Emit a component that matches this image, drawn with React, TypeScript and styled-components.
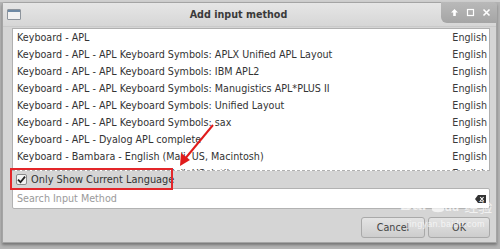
import styled, { createGlobalStyle } from "styled-components";

const GlobalStyle = createGlobalStyle`
  html, body {
    margin: 0;
    padding: 0;
    background: #9c9c9c;
  }
  body {
    font-family: "DejaVu Sans", "Liberation Sans", sans-serif;
    font-size: 9.6px;
    color: #333;
  }
`;

const methods = [
  "Keyboard - APL",
  "Keyboard - APL - APL Keyboard Symbols: APLX Unified APL Layout",
  "Keyboard - APL - APL Keyboard Symbols: IBM APL2",
  "Keyboard - APL - APL Keyboard Symbols: Manugistics APL*PLUS II",
  "Keyboard - APL - APL Keyboard Symbols: Unified Layout",
  "Keyboard - APL - APL Keyboard Symbols: sax",
  "Keyboard - APL - Dyalog APL complete",
  "Keyboard - Bambara - English (Mali, US, Macintosh)",
  "Keyboard - Bambara - English (Mali, US, Intl)",
];

const App = () => {
  return (
    <>
      <GlobalStyle />
      <Screen>
        <Window>
          <TitleBar>
            <WindowIcon />
            <Title>Add input method</Title>
            <Controls>
              <svg width="9" height="9" viewBox="0 0 9 9">
                <path d="M4.5 1 L8 4.5 H5.8 V8 H3.2 V4.5 H1 Z" fill="#fff" />
              </svg>
              <svg width="9" height="9" viewBox="0 0 9 9">
                <rect x="1.5" y="1.5" width="6" height="6" fill="none" stroke="#fff" strokeWidth="1.2" />
              </svg>
              <svg width="9" height="9" viewBox="0 0 9 9">
                <path d="M1.5 1.5 L7.5 7.5 M7.5 1.5 L1.5 7.5" stroke="#fff" strokeWidth="1.6" />
              </svg>
            </Controls>
          </TitleBar>

          <Body>
            <List>
              {methods.map((m) => (
                <Row key={m}>
                  <span>{m}</span>
                  <Lang>English</Lang>
                </Row>
              ))}
            </List>

            <CheckRow>
              <CheckBox>
                <svg width="9" height="9" viewBox="0 0 9 9">
                  <path d="M1 4.6 L3.5 7.2 L8 1.6" fill="none" stroke="#222" strokeWidth="1.8" />
                </svg>
              </CheckBox>
              <span>Only Show Current Language</span>
              <Highlight />
            </CheckRow>

            <Search>
              <Placeholder>Search Input Method</Placeholder>
              <svg width="11" height="8" viewBox="0 0 11 8">
                <path d="M3 0 H11 V8 H3 L0 4 Z" fill="#333" />
                <path d="M5.2 2 L8.6 6 M8.6 2 L5.2 6" stroke="#fff" strokeWidth="1.1" />
              </svg>
            </Search>

            <Buttons>
              <Button $width={64}>Cancel</Button>
              <Button $width={62}>OK</Button>
            </Buttons>
          </Body>
        </Window>

        <Arrow width="500" height="249" viewBox="0 0 500 249">
          <line x1="213" y1="125" x2="184" y2="160" stroke="#e01b1b" strokeWidth="2" />
          <path d="M180 166 L181 153 L190 160 Z" fill="#e01b1b" />
        </Arrow>

        <Watermark>
          <Brand>
            Bai
            <svg width="22" height="20" viewBox="0 0 22 20">
              <ellipse cx="5" cy="6" rx="2.4" ry="3" fill="#fff" />
              <ellipse cx="10" cy="3.2" rx="2.4" ry="3" fill="#fff" />
              <ellipse cx="15.5" cy="4" rx="2.4" ry="3" fill="#fff" />
              <ellipse cx="19" cy="9" rx="2.2" ry="2.8" fill="#fff" />
              <path d="M11 8 C7 8 4 14 5 17 C6 20 16 20 17 17 C18 14 15 8 11 8 Z" fill="#fff" />
            </svg>
            <Du>du</Du>
            <Cn>经验</Cn>
          </Brand>
          <Site>jingyan.baidu.com</Site>
        </Watermark>
      </Screen>
    </>
  );
};

//  --- Layout ---
const Screen = styled.div`
  position: relative;
  width: 500px;
  height: 249px;
  overflow: hidden;
  background: linear-gradient(#cfcfcf 0 2px, #b4b4b4 2px);
  padding: 2px 3px 0 2px;
  box-sizing: border-box;
`;

const Window = styled.div`
  display: flex;
  flex-direction: column;
  height: 239px;
  background: #d5d5d5;
  border: 1px solid #a4a4a4;
  border-radius: 3px 3px 0 0;
  box-shadow: 0 2px 3px rgba(0, 0, 0, 0.35);
`;

const TitleBar = styled.div`
  position: relative;
  display: flex;
  align-items: center;
  height: 23px;
  padding-left: 4px;
  background: linear-gradient(#e6e6e6, #d6d6d6);
  border-bottom: 1px solid #cacaca;
`;

const WindowIcon = styled.div`
  width: 12px;
  height: 9px;
  border: 1px solid #8d949c;
  background: linear-gradient(#6f8aa5 0 2px, #f2f2f2 2px);
  border-radius: 1px;
`;

const Title = styled.div`
  flex: 1;
  text-align: center;
  font-weight: bold;
  font-size: 9.6px;
  color: #3a3a3a;
  padding-right: 40px;
`;

const Controls = styled.div`
  position: absolute;
  top: -1px;
  right: -1px;
  display: flex;
  align-items: center;
  gap: 7px;
  height: 21px;
  padding: 0 6px 0 9px;
  background: linear-gradient(#b9b9b9, #a5a5a5);
  border-radius: 0 3px 0 6px;
`;

const Body = styled.div`
  display: flex;
  flex-direction: column;
  padding: 1px 6px 0 9px;
`;

const List = styled.div`
  height: 141px;
  overflow: hidden;
  background: #fff;
  border: 1px solid #b0b0b0;
  border-bottom-style: dashed;
`;

const Row = styled.div`
  display: flex;
  justify-content: space-between;
  align-items: center;
  height: 17px;
  padding: 0 2px 0 4px;
  white-space: nowrap;
`;

const Lang = styled.span`
  color: #3a3a3a;
`;

const CheckRow = styled.div`
  position: relative;
  display: flex;
  align-items: center;
  gap: 4px;
  height: 17px;
  padding: 0 0 0 4px;
  font-size: 9.8px;
`;

const CheckBox = styled.div`
  display: flex;
  align-items: center;
  justify-content: center;
  width: 9px;
  height: 9px;
  background: #f4f4f4;
  border: 1px solid #8a8a8a;
  border-radius: 2px;
`;

const Highlight = styled.div`
  position: absolute;
  left: -2px;
  top: -3px;
  width: 159px;
  height: 18px;
  border: 2px solid #e3262a;
`;

const Search = styled.div`
  display: flex;
  align-items: center;
  justify-content: space-between;
  height: 19px;
  padding: 0 3px 0 4px;
  background: #fff;
  border: 1px solid #b2b2b2;
  border-radius: 2px;
`;

const Placeholder = styled.span`
  color: #9a9a9a;
`;

const Buttons = styled.div`
  display: flex;
  justify-content: flex-end;
  gap: 3px;
  padding: 8px 0 0;
`;

const Button = styled.button<{ $width: number }>`
  width: ${(p) => p.$width}px;
  height: 21px;
  font-family: "DejaVu Sans", "Liberation Sans", sans-serif;
  font-size: 9.6px;
  color: #444;
  background: linear-gradient(#e4e4e4, #cdcdcd);
  border: 1px solid #a9a9a9;
  border-radius: 3px;
`;

//  --- Overlays ---
const Arrow = styled.svg`
  position: absolute;
  left: 0;
  top: 0;
  pointer-events: none;
`;

const Watermark = styled.div`
  position: absolute;
  left: 400px;
  top: 193px;
  display: flex;
  flex-direction: column;
  align-items: center;
  opacity: 0.7;
  pointer-events: none;
`;

const Brand = styled.div`
  display: flex;
  align-items: flex-end;
  gap: 1px;
  font-family: "Liberation Sans", sans-serif;
  font-weight: bold;
  font-size: 17px;
  color: #fff;
  line-height: 1;
`;

const Du = styled.span`
  font-size: 12px;
  margin-left: -6px;
`;

const Cn = styled.span`
  font-family: "Noto Sans CJK SC", sans-serif;
  font-weight: normal;
  font-size: 14px;
  margin-left: 4px;
`;

const Site = styled.div`
  margin-top: 6px;
  font-family: "Liberation Sans", sans-serif;
  font-size: 9px;
  color: #fff;
  letter-spacing: 0.3px;
`;

export default App;
